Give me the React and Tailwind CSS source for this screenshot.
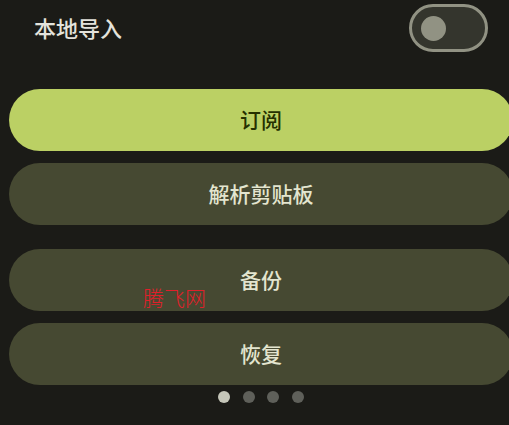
export default function App() {
  const font = { fontFamily: '"Noto Sans", "Noto Sans CJK SC", sans-serif' };
  return (
    <div
      className="relative w-[509px] h-[425px] overflow-hidden bg-[#1b1b17]"
      style={font}
    >
      <div className="flex h-[56px] items-center justify-between pl-[34px] pr-[21px]">
        <span className="text-[22px] font-medium leading-none text-[#e4e3dc]">本地导入</span>
        <div className="flex h-[48px] w-[79px] items-center rounded-full border-[3px] border-[#919283] bg-[#34352d] pl-[9px]">
          <div className="h-[25px] w-[25px] rounded-full bg-[#919283]" />
        </div>
      </div>
      <div className="ml-[9px] mt-[33px] flex w-[504px] flex-col">
        <button className="flex h-[62px] items-center justify-center rounded-full bg-[#bbd064] pt-[1px] text-[21px] font-medium text-[#253000]">
          订阅
        </button>
        <button className="mt-[12px] flex h-[62px] items-center justify-center rounded-full bg-[#464932] pt-[1px] text-[21px] font-medium text-[#e3e5cf]">
          解析剪贴板
        </button>
        <button className="mt-[24px] flex h-[62px] items-center justify-center rounded-full bg-[#464932] pt-[1px] text-[21px] font-medium text-[#e3e5cf]">
          备份
        </button>
        <button className="mt-[12px] flex h-[62px] items-center justify-center rounded-full bg-[#464932] pt-[1px] text-[21px] font-medium text-[#e3e5cf]">
          恢复
        </button>
        <div className="mt-[6px] flex items-center justify-center gap-[12.6px]">
          <div className="h-[12px] w-[12px] rounded-full bg-[#c5c6b9]" />
          <div className="h-[12px] w-[12px] rounded-full bg-[#5f605a]" />
          <div className="h-[12px] w-[12px] rounded-full bg-[#5f605a]" />
          <div className="h-[12px] w-[12px] rounded-full bg-[#5f605a]" />
        </div>
      </div>
      <span className="absolute left-[143px] top-[284px] text-[21px] font-light leading-[28px] text-[#e0202a]">
        腾飞网
      </span>
    </div>
  );
}
